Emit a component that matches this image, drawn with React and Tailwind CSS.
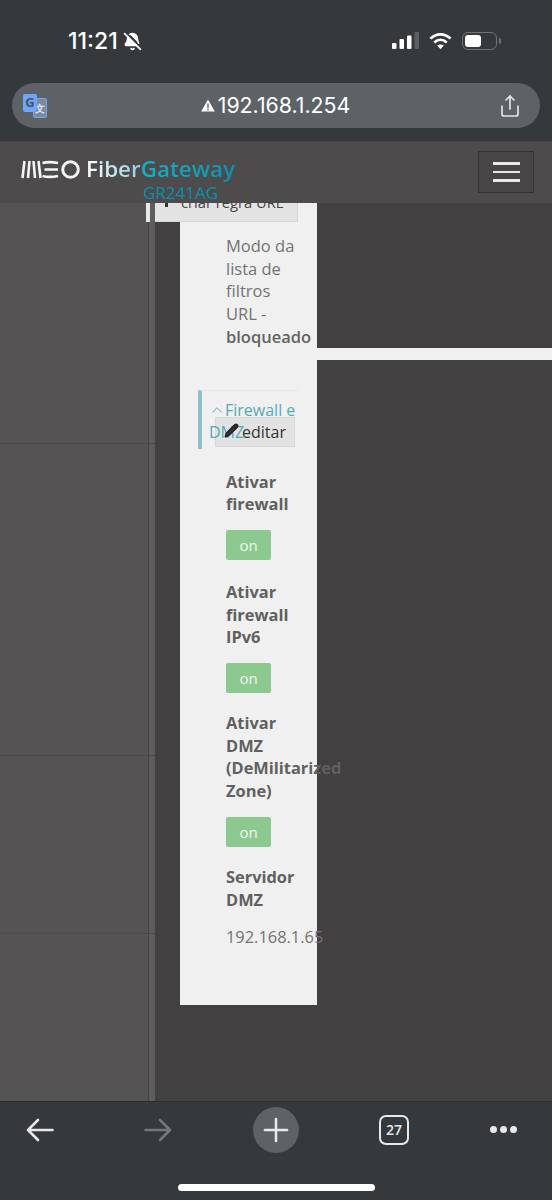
import { Share, Plus, ChevronUp, Pencil, BellOff } from "lucide-react";

const sans = { fontFamily: '"Open Sans", sans-serif' };

function StatusIcons() {
  return (
    <div className="flex items-center gap-[10px]">
      <svg width="27" height="18" viewBox="0 0 27 18">
        <rect x="0" y="11" width="4.500" height="6" rx="1" fill="#fff" />
        <rect x="7.500" y="7" width="4.500" height="10" rx="1" fill="#fff" />
        <rect x="15" y="3.500" width="4.500" height="13.500" rx="1" fill="#fff" />
        <rect x="22.500" y="0" width="4.500" height="17" rx="1" fill="#5c6063" />
      </svg>
      <svg width="23" height="18" viewBox="0 0 24 18" fill="none" stroke="#fff" strokeWidth="2.800">
        <path d="M1.500 6.500C7.500 0.500 16.500 0.500 22.500 6.500" />
        <path d="M5.500 10.500C9.500 6.800 14.500 6.800 18.500 10.500" />
        <path d="M12 17.500L8.500 13.800C10.500 12.200 13.500 12.200 15.500 13.800Z" fill="#fff" stroke="none" />
      </svg>
      <div className="flex items-center">
        <div className="flex h-[18px] w-[35px] items-center rounded-[6px] border-[1.500px] border-[#707375] p-[2px]">
          <div className="h-full w-[16px] rounded-[3px] bg-white" />
        </div>
        <div className="ml-[2px] h-[6px] w-[2px] rounded-r-full bg-[#707375]" />
      </div>
    </div>
  );
}

function TranslateIcon() {
  return (
    <div className="relative h-[24px] w-[24px]">
      <div className="absolute bottom-0 right-0 flex h-[20px] w-[14px] items-center justify-center rounded-[2px] border border-[#6ea6fb] bg-[#7d8a9c] text-[10px] font-bold leading-none text-[#dfe7f2]">
        文
      </div>
      <div className="absolute left-0 top-0 flex h-[18px] w-[14px] items-center justify-center rounded-[2px] bg-[#6ea6fb] text-[13px] font-bold leading-none text-[#4a5360]">
        G
      </div>
    </div>
  );
}

function MeoLogo() {
  return (
    <svg width="59" height="19" viewBox="0 0 59 19" fill="none" stroke="#f6f6f6" strokeWidth="2.600">
      <path d="M3.500 1L1.500 18M8.500 1L7 18M12.500 1L14 18M17.500 1L19.500 18" />
      <path d="M21.500 3C26 1.800 31 1.800 37 3M23.500 9.500H37M21.500 16C26 17.200 31 17.200 37 16" />
      <circle cx="49.500" cy="9.500" r="7.800" strokeWidth="3" />
    </svg>
  );
}

function SwitchOn() {
  return (
    <div className="mt-[14px] flex h-[30px] w-[45px] items-center justify-center rounded-[2px] bg-[#8cc98f] text-[15px] text-[#f2f7f2]">
      on
    </div>
  );
}

function FieldLabel({ children, className = "" }) {
  return <p className={`text-[16.400px] font-bold leading-[22.700px] text-[#606060] ${className}`}>{children}</p>;
}

function Arrow({ color, flip }) {
  return (
    <svg width="28" height="24" viewBox="0 0 28 24" fill="none" stroke={color} strokeWidth="2.600" strokeLinecap="round" strokeLinejoin="round" className={flip ? "-scale-x-100" : ""}>
      <path d="M2 12H26.500M12 2L2 12L12 22" />
    </svg>
  );
}

export default function App() {
  return (
    <div className="flex h-[1200px] w-[552px] flex-col overflow-hidden bg-[#434041]" style={sans}>
      <header className="z-20 shrink-0 bg-[#35393c]">
        <div className="flex h-[83px] items-start justify-between pl-[68px] pr-[51px] pt-[27px]">
          <div className="flex items-center gap-[5px] text-[23px] font-medium leading-[28px] text-white" style={{ fontFamily: "Inter, sans-serif" }}>
            <span>11:21</span>
            <BellOff size={19} strokeWidth={2.200} fill="#fff" />
          </div>
          <div className="pt-[5px]">
            <StatusIcons />
          </div>
        </div>
        <div className="px-[12px]">
          <div className="flex h-[45px] items-center justify-between rounded-[23px] bg-[#5d6266] pl-[11px] pr-[18px]">
            <TranslateIcon />
            <div className="ml-[6px] flex items-center gap-[3px] text-[21.300px] leading-none text-white" style={{ fontFamily: "Inter, sans-serif" }}>
              <svg width="14" height="13" viewBox="0 0 14 13">
                <path fillRule="evenodd" fill="#fff" d="M7 0.500L13.800 12.500H0.200ZM6.300 4.500V9H7.700V4.500ZM6.300 9.800V11.200H7.700V9.800Z" />
              </svg>
              <span>192.168.1.254</span>
            </div>
            <Share size={24} strokeWidth={1.700} color="#e3e4e5" />
          </div>
        </div>
        <div className="h-[13px]" />
      </header>

      <nav className="relative z-20 flex h-[62px] shrink-0 items-start justify-between border-t border-[#444243] bg-[#4d4b4c] pl-[21px] pr-[18px]">
        <div className="relative flex items-center gap-[6px] pt-[13px]">
          <MeoLogo />
          <span className="text-[22.400px] font-semibold leading-[28px]">
            <span className="bg-gradient-to-r from-white to-[#8fd0da] bg-clip-text text-transparent">Fiber</span>
            <span className="bg-gradient-to-r from-[#16b2c6] to-[#0b93b0] bg-clip-text text-transparent">Gateway</span>
          </span>
          <span className="absolute left-[122px] top-[42px] text-[17px] leading-[18px] text-[#0a8fb0]">GR241AG</span>
        </div>
        <button type="button" className="mt-[9px] flex h-[42px] w-[56px] flex-col items-center justify-center gap-[6px] border border-[#353334] bg-[#474546]">
          <span className="h-[2.500px] w-[27px] bg-[#e8e8e8]" />
          <span className="h-[2.500px] w-[27px] bg-[#e8e8e8]" />
          <span className="h-[2.500px] w-[27px] bg-[#e8e8e8]" />
        </button>
      </nav>

      <main className="relative flex min-h-0 flex-1 overflow-hidden">
        <aside className="flex w-[148px] shrink-0 flex-col bg-[#565354]">
          <div className="h-[241px] border-b border-[#4b494a]" />
          <div className="h-[312px] border-b border-[#4b494a]" />
          <div className="h-[178px] border-b border-[#4b494a]" />
        </aside>
        <div className="flex w-[7px] shrink-0 flex-col border-l border-[#444243] bg-[#5f5c5d]">
          <div className="h-[241px] border-b border-[#4b494a]" />
          <div className="h-[312px] border-b border-[#4b494a]" />
          <div className="h-[178px] border-b border-[#4b494a]" />
        </div>
        <div className="absolute left-[146px] top-0 h-[19px] w-[4px] bg-[#e8e8e8]" />

        <div className="relative min-w-0 flex-1">
          <div className="relative z-10 mt-[-20px] flex h-[39px] w-[143px] items-center gap-[13px] border-b border-r border-[#d6d6d6] bg-[#e3e3e3] pl-[10px] text-[14.700px] text-[#444]">
            <span className="mt-[2px] h-[8px] w-[3px] bg-[#333]" />
            <span className="whitespace-nowrap">criar regra URL</span>
          </div>

          <div className="absolute left-[25px] top-0 h-[802px] w-[137px] bg-[#f0f0f0] pl-[46px] pr-[5px] pt-[32px]">
            <p className="text-[16.500px] leading-[22.700px] text-[#737373]">
              Modo da lista de filtros
              <br />
              URL - <span className="font-semibold text-[#636363]">bloqueado</span>
            </p>

            <div className="relative ml-[-28px] mt-[41px] h-[59px] w-[100px] border-l-[4px] border-t border-[#e5e5e5] border-l-[#8dc0cd]">
              <div className="flex items-center pl-[6px] pt-[9px] text-[16px] leading-[21px] text-[#55a9bb]">
                <ChevronUp size={18} strokeWidth={1.300} className="mr-[-1px] shrink-0" />
                <span className="whitespace-nowrap">Firewall e</span>
              </div>
              <div className="absolute left-[13px] top-[26px] flex h-[30px] w-[80px] items-center justify-end border border-[#d8d8d8] bg-[#e3e3e3] pr-[8px] text-[16px] text-[#333]">
                <span>editar</span>
              </div>
              <span className="absolute left-[7px] top-[31px] text-[16px] leading-[21px] text-[#55a9bb]">DMZ</span>
              <Pencil size={15} strokeWidth={2.200} fill="#333" color="#222" className="absolute left-[22px] top-[32px]" />
            </div>

            <FieldLabel className="mt-[22px]">Ativar firewall</FieldLabel>
            <SwitchOn />
            <FieldLabel className="mt-[21px]">Ativar firewall IPv6</FieldLabel>
            <SwitchOn />
            <FieldLabel className="mt-[19px]">
              Ativar DMZ <span className="block whitespace-nowrap">(DeMilitarized</span> Zone)
            </FieldLabel>
            <SwitchOn />
            <FieldLabel className="mt-[19px]">Servidor DMZ</FieldLabel>
            <p className="mt-[15px] whitespace-nowrap text-[16.400px] leading-[22px] text-[#737373]">192.168.1.65</p>
          </div>

          <div className="absolute left-[162px] right-0 top-[145px] h-[12px] bg-[#f0f0f0]" />
        </div>
      </main>

      <footer className="z-20 flex h-[99px] shrink-0 flex-col border-t border-[#2b2d2f] bg-[#35393c]">
        <div className="flex h-[55px] items-center gap-[78px] pl-[20px]">
          <div className="flex w-[40px] justify-center">
            <Arrow color="#e8e9ea" />
          </div>
          <div className="flex w-[40px] justify-center">
            <Arrow color="#75787a" flip />
          </div>
          <div className="flex w-[40px] justify-center">
            <div className="flex h-[46px] w-[46px] shrink-0 items-center justify-center rounded-full bg-[#5d6266]">
              <Plus size={38} strokeWidth={1.600} color="#e8e9ea" />
            </div>
          </div>
          <div className="flex w-[40px] justify-center">
            <div className="flex h-[30px] w-[30px] items-center justify-center rounded-[7px] border-2 border-[#e8e9ea] text-[14px] font-semibold text-[#e8e9ea]">
              27
            </div>
          </div>
          <div className="ml-[-9px] flex w-[40px] justify-center gap-[3px]">
            <span className="h-[7px] w-[7px] rounded-full bg-[#e8e9ea]" />
            <span className="h-[7px] w-[7px] rounded-full bg-[#e8e9ea]" />
            <span className="h-[7px] w-[7px] rounded-full bg-[#e8e9ea]" />
          </div>
        </div>
        <div className="mt-[27px] flex justify-center">
          <div className="h-[7px] w-[197px] rounded-full bg-white" />
        </div>
      </footer>
    </div>
  );
}
